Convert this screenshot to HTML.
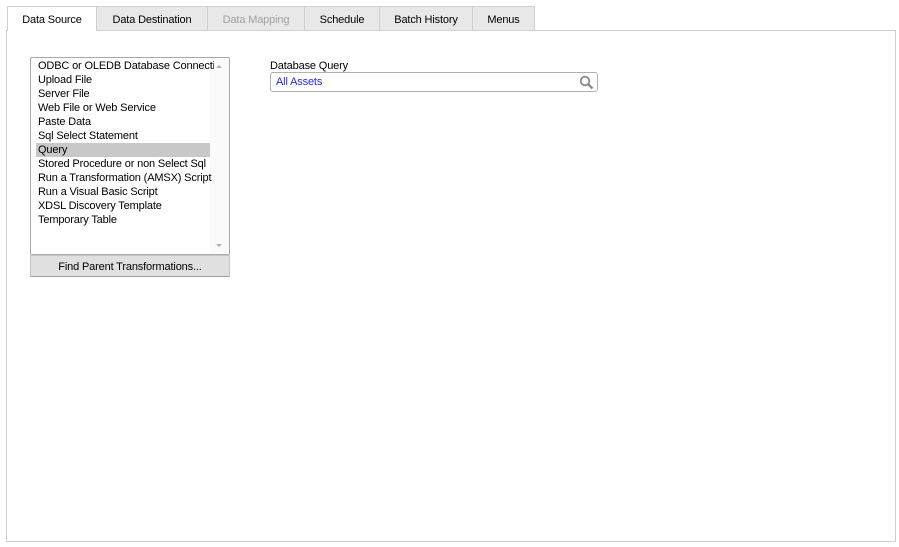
<!DOCTYPE html>
<html><head><style>
body{margin:0;width:899px;height:547px;background:#fff;font-family:"Liberation Sans",sans-serif;font-size:11px;letter-spacing:-0.15px;color:#000;position:relative;overflow:hidden}
.tab{position:absolute;top:6px;height:24px;line-height:26px;text-align:center;background:#e8e8e8;border:1px solid #d0d0d0;border-bottom:none;box-sizing:border-box}
.panel{position:absolute;left:6px;top:30px;width:890px;height:512px;border:1px solid #d0d0d0;box-sizing:border-box}
.list{position:absolute;left:30px;top:57px;width:200px;height:198px;border:1px solid #a9a9a9;box-sizing:border-box;border-radius:2px}
.it{position:absolute;left:7px;height:14px;line-height:15px;white-space:nowrap;overflow:hidden;width:176px}
.sb{position:absolute;right:0;top:0;width:19px;height:100%;background:#fafafa}
</style></head><body>
<div class="panel"></div>
<div class="tab" style="left:7px;width:90px;background:#fff;height:25px">Data Source</div>
<div class="tab" style="left:96px;width:112px">Data Destination</div>
<div class="tab" style="left:207px;width:98px;color:#a0a0a0">Data Mapping</div>
<div class="tab" style="left:304px;width:76px">Schedule</div>
<div class="tab" style="left:379px;width:94px">Batch History</div>
<div class="tab" style="left:472px;width:63px">Menus</div>
<div class="list">
<div class="sb"><div style="position:absolute;left:6px;top:7px;border:3px solid transparent;border-bottom:3px solid #b0b0b0;border-top:0"></div><div style="position:absolute;left:6px;bottom:7px;border:3px solid transparent;border-top:3px solid #b0b0b0;border-bottom:0"></div></div>
<div style="position:absolute;left:5px;top:85px;width:174px;height:14px;background:#c8c8c8"></div>
<div class="it" style="top:1px">ODBC or OLEDB Database Connection</div>
<div class="it" style="top:15px">Upload File</div>
<div class="it" style="top:29px">Server File</div>
<div class="it" style="top:43px">Web File or Web Service</div>
<div class="it" style="top:57px">Paste Data</div>
<div class="it" style="top:71px">Sql Select Statement</div>
<div class="it" style="top:85px">Query</div>
<div class="it" style="top:99px">Stored Procedure or non Select Sql</div>
<div class="it" style="top:113px">Run a Transformation (AMSX) Script</div>
<div class="it" style="top:127px">Run a Visual Basic Script</div>
<div class="it" style="top:141px">XDSL Discovery Template</div>
<div class="it" style="top:155px">Temporary Table</div>
</div>
<div style="position:absolute;left:30px;top:255px;width:200px;height:22px;background:#e0e0e0;border:1px solid #c8c8c8;border-bottom-color:#a0a0a0;box-sizing:border-box;text-align:center;line-height:23px">Find Parent Transformations...</div>
<div style="position:absolute;left:270px;top:59px;line-height:14px">Database Query</div>
<div style="position:absolute;left:270px;top:72px;width:328px;height:20px;border:1px solid #b0b0b0;border-radius:3px;box-sizing:border-box;color:#2a2ae0;line-height:19px;padding-left:5px">All Assets
<svg style="position:absolute;right:3px;top:2px" width="15" height="15" viewBox="0 0 15 15"><circle cx="6" cy="6" r="4.3" fill="none" stroke="#8a8a8a" stroke-width="1.8"/><path d="M9.2 9.2L13.5 13.5" stroke="#8a8a8a" stroke-width="2.4"/></svg></div>
</body></html>
